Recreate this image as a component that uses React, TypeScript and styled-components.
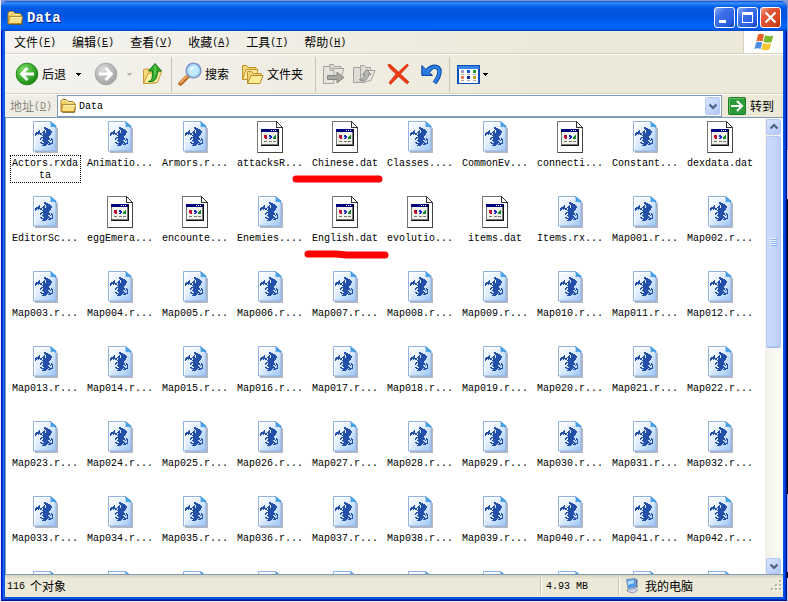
import React from 'react';
import styled, { createGlobalStyle, css } from 'styled-components';

const MONO = '"Liberation Mono", "Noto Sans CJK SC", monospace';
const CJK = '"Noto Sans CJK SC", "Liberation Sans", sans-serif';

const GlobalStyle = createGlobalStyle`
  *, *::before, *::after { box-sizing: border-box; }
  body { margin: 0; overflow: hidden; background: #a9b6da; }
  button, input { margin: 0; padding: 0; border: 0; background: none; font: inherit; color: inherit; }
  ul { list-style: none; margin: 0; padding: 0; }
  svg { display: block; flex: none; }
`;

const Desktop = styled.div`
  height: 100vh;
  display: flex;
  padding: 1px;
  background:
    linear-gradient(#e8eaf4, #e8eaf4) left / 1px 100% no-repeat,
    linear-gradient(#7f9be0 25%, #c3cfee 25% 33%, #000 33% 82%, #9fb2ea 82% 95%, #000 95% 96%, #cfd6ee 96%) right / 1px 100% no-repeat,
    linear-gradient(#7d96dc 50%, #e8eaf4 50%);
`;

const Window = styled.main`
  flex: 1;
  min-width: 0;
  display: flex;
  flex-direction: column;
  border-radius: 7px 7px 0 0;
  background: linear-gradient(90deg, #0019cf 0 1px, #0831d9 1px 2px, #166aee 2px 3px, #0855dd 3px calc(100% - 3px), #0048e8 calc(100% - 3px) calc(100% - 2px), #0030c8 calc(100% - 2px) calc(100% - 1px), #00138c calc(100% - 1px));
  padding: 0 4px 4px;
  box-shadow: inset 0 -1px #00138c, inset 0 -2px #0030c8;
  font: 12px/16px ${CJK};
  color: #000;
`;

const TitleBar = styled.header`
  height: 30px;
  flex: none;
  margin: 0 -4px;
  padding: 3px 6px 0 6px;
  display: flex;
  align-items: center;
  gap: 4px;
  border-radius: 7px 7px 0 0;
  background: linear-gradient(#0950c8 0, #3b91ff 2px, #1272f4 4px, #0359e0 7px, #0054e0 16px, #0064fa 24px, #0062f5 27px, #0046c8 30px);
`;

const Title = styled.h1`
  flex: 1;
  margin: 0;
  font: bold 14px/20px ${MONO};
  color: #fff;
  text-shadow: 1px 1px #0a1883;
`;

const Captions = styled.div`
  display: flex;
  gap: 2px;
`;

const CaptionButton = styled.button<{ $close?: boolean }>`
  width: 21px;
  height: 21px;
  display: grid;
  place-items: center;
  border: 1px solid #fff;
  border-radius: 3px;
  background: ${p => p.$close
    ? 'linear-gradient(135deg, #f0a088, #e2593a 30%, #d84420 75%, #b02a08)'
    : 'linear-gradient(135deg, #8fb0fa, #3f72ea 30%, #2a5fe0 75%, #1440b8)'};
`;

const MenuBar = styled.nav`
  height: 24px;
  flex: none;
  display: flex;
  background: linear-gradient(90deg, #f4f3f0, #ece9d8 75%);
  border-bottom: 1px solid #fff;
`;

const MenuItems = styled.div`
  flex: 1;
  display: flex;
  padding-left: 1px;
  border-bottom: 1px solid #d8d2bd;
`;

const MenuButton = styled.button`
  padding: 0 8px;
  display: flex;
  align-items: center;
  white-space: nowrap;
`;

const Latin = styled.span`
  padding-top: 1px;
  font: 10px/16px ${MONO};
`;

const FlagCell = styled.div`
  width: 40px;
  display: grid;
  place-items: center;
  background: #fff;
  border-left: 1px solid #d8d2bd;
  border-bottom: 1px solid #d8d2bd;
`;

const ToolBar = styled.div`
  height: 40px;
  flex: none;
  display: flex;
  align-items: center;
  padding-left: 9px;
  padding-bottom: 1px;
  background: linear-gradient(90deg, #f3f2ee, #ece9d8 75%);
  border-bottom: 1px solid #fff;
  box-shadow: inset 0 -1px #d8d2bd;
`;

const ToolButton = styled.button<{ $pad?: number }>`
  height: 32px;
  display: flex;
  align-items: center;
  gap: 3px;
  padding: 0 ${p => p.$pad ?? 3}px;
  white-space: nowrap;
`;

const ArrowButton = styled.button<{ $muted?: boolean }>`
  width: ${p => (p.$muted ? 13 : 22)}px;
  height: 32px;
  display: grid;
  place-items: center;
  color: ${p => (p.$muted ? '#b9b6a8' : '#000')};
`;

const Divider = styled.span`
  width: 1px;
  height: 35px;
  margin: 0 3px;
  background: #c9c5b2;
`;

const AddressBar = styled.div`
  height: 22px;
  flex: none;
  display: flex;
  align-items: stretch;
  background: linear-gradient(90deg, #efeee6, #ece9d8 75%);
`;

const AddressLabel = styled.label`
  width: 52px;
  display: flex;
  align-items: center;
  padding-left: 5px;
  color: #8b887c;
  white-space: nowrap;
`;

const AddressBox = styled.div`
  flex: 1;
  min-width: 0;
  display: flex;
  align-items: center;
  gap: 3px;
  padding: 0 1px 0 2px;
  background: #fff;
  border: 1px solid #7f9db9;
`;

const AddressInput = styled.input`
  flex: 1;
  min-width: 0;
  padding-top: 2px;
  font: 10px/16px ${MONO};
  outline: none;
`;

const scrollFace = css`
  display: grid;
  place-items: center;
  border: 1px solid #b4c8f6;
  border-radius: 2px;
  background: linear-gradient(135deg, #d9e4fe, #c1d3fc 60%, #b3c8f7);
`;

const DropButton = styled.button`
  width: 15px;
  height: 18px;
  ${scrollFace}
`;

const GoButton = styled.button`
  width: 61px;
  display: flex;
  align-items: center;
  gap: 4px;
  padding-left: 6px;
`;

const Content = styled.section`
  flex: 1;
  min-height: 0;
  display: flex;
  background: #fff;
  border: solid #7f9db9;
  border-width: 1px 0 1px 1px;
`;

const FileArea = styled.div`
  flex: 1;
  min-width: 0;
  overflow: hidden;
  position: relative;
`;

const FileGrid = styled.ul`
  display: grid;
  grid-template-columns: repeat(auto-fill, 75px);
  grid-auto-rows: 75px;
  padding: 3px 0 0 2px;
`;

const FileItem = styled.li`
  display: flex;
  flex-direction: column;
  align-items: center;
  gap: 2px;
`;

const FileName = styled.button<{ $focused?: boolean }>`
  width: 71px;
  padding: 2px 2px 0 1px;
  border: 1px ${p => (p.$focused ? 'dotted #000' : 'solid transparent')};
  font: 10px/12px ${MONO};
  text-align: center;
  overflow-wrap: anywhere;
`;

const Marker = styled.svg`
  position: absolute;
  left: 286px;
  top: 56px;
`;

const ScrollBar = styled.div`
  width: 18px;
  flex: none;
  display: flex;
  flex-direction: column;
  padding: 1px 2px 0 1px;
  background: linear-gradient(90deg, #f2f0e8, #fefefb);
`;

const ScrollButton = styled.button`
  height: 16px;
  ${scrollFace}
`;

const ScrollTrack = styled.div`
  flex: 1;
  padding-top: 1px;
`;

const ScrollThumb = styled.div`
  height: 50%;
  ${scrollFace}
  background: linear-gradient(90deg, #cbdafd, #c5d5fc 60%, #b7cbf9);
  box-shadow: 0 1px #a3b8e2;
`;

const StatusBar = styled.footer`
  height: 22px;
  flex: none;
  display: flex;
  align-items: center;
  background: linear-gradient(#d5d1bd, #ece9d8 4px, #ece9d8);
`;

const StatusCell = styled.div<{ $width?: number }>`
  ${p => (p.$width ? `width: ${p.$width}px; border-left: 1px solid #c5c1ae; box-shadow: inset 1px 0 #fff; padding-left: 5px;` : 'flex: 1; padding-left: 2px;')}
  height: 18px;
  display: flex;
  align-items: center;
  gap: 5px;
  white-space: nowrap;
`;

const FolderIcon = () => (
  <svg width="16" height="16" viewBox="0 0 16 16" aria-hidden="true">
    <path d="M1 13.500V3l1.200-1.500h4L8 3.500h5l1.500 1.500v9z" fill="#f2cf63" stroke="#a57a1c" strokeLinejoin="round" />
    <path d="M2 4.500 3 2.500h3l1.500 2H13" fill="none" stroke="#fff3b8" />
    <path d="M1.500 13.500 2.500 6.500H15.500L14.500 13.500Z" fill="#fbdf84" stroke="#b98b24" strokeLinejoin="round" />
    <path d="M3.500 7.500h11" stroke="#fff7cf" />
    <path d="M2 14.500h12.500l1-5" fill="none" stroke="#6f5714" strokeOpacity=".7" />
  </svg>
);

const Triangle = () => (
  <svg width="5" height="3" viewBox="0 0 5 3" shapeRendering="crispEdges" aria-hidden="true">
    <path d="M0 0h5v1H4v1H3v1H2V2H1V1H0z" fill="currentColor" />
  </svg>
);

const Chevron = ({ up }: { up?: boolean }) => (
  <svg width="10" height="8" viewBox="0 0 10 8" aria-hidden="true">
    <path d={up ? 'M1.500 5.500 5 2l3.500 3.500' : 'M1.500 2.500 5 6l3.500-3.500'} fill="none" stroke="#4d6185" strokeWidth="2.200" />
  </svg>
);

const RoundArrow = ({ forward }: { forward?: boolean }) => (
  <svg width="24" height="24" viewBox="0 0 24 24" aria-hidden="true">
    <defs>
      <radialGradient id={forward ? 'fwd' : 'bck'} cx=".35" cy=".3" r=".8">
        <stop offset="0" stopColor={forward ? '#dcdcdc' : '#7fdc68'} />
        <stop offset=".6" stopColor={forward ? '#b5b5b5' : '#36a92c'} />
        <stop offset="1" stopColor={forward ? '#a0a0a0' : '#187a12'} />
      </radialGradient>
    </defs>
    <circle cx="12" cy="12" r="10.800" fill={`url(#${forward ? 'fwd' : 'bck'})`} stroke={forward ? '#a5a5a5' : '#258a1e'} />
    <path
      d={forward ? 'M5 12h12M11.500 6 17.500 12l-6 6' : 'M19 12H7M12.500 6 6.500 12l6 6'}
      fill="none" stroke="#fff" strokeWidth="2.800"
    />
  </svg>
);

const UpIcon = () => (
  <svg width="22" height="24" viewBox="0 0 22 24" aria-hidden="true">
    <path d="M2.500 21.500V8l1-1H8l1.500 2H14v12z" fill="#f5d978" stroke="#c79a32" />
    <path d="M2.500 21.500 7 11.500l13.500-2-4 11z" fill="#fdeea6" stroke="#c79a32" strokeLinejoin="round" />
    <path d="M7 19.500c4-.5 4.500-3 4.500-10.500H7.500l6.500-7.500L20.500 9h-4c0 8-3 11.500-9.500 10.500z" fill="#35ad2c" stroke="#14790f" strokeLinejoin="round" />
    <path d="M14 4v9" stroke="#79dc65" />
  </svg>
);

const SearchIcon = () => (
  <svg width="24" height="24" viewBox="0 0 24 24" aria-hidden="true">
    <path d="m2.500 21.500 7-7" stroke="#b46a28" strokeWidth="4.500" strokeLinecap="round" />
    <path d="m2.500 20.500 6.500-6.500" stroke="#f3a55e" strokeWidth="2" strokeLinecap="round" />
    <circle cx="15.500" cy="8.500" r="7.300" fill="#c3ebfd" stroke="#8293c9" strokeWidth="1.600" />
    <circle cx="15.500" cy="8.500" r="5.800" fill="none" stroke="#92d4f7" />
    <path d="M12 8c.5-3 3-4 5.500-3.500C16 6 14 8 12 8z" fill="#fff" />
  </svg>
);

const FoldersIcon = () => (
  <svg width="23" height="22" viewBox="0 0 23 22" aria-hidden="true">
    <path d="M1.500 16V2.500h4l1.500 2h8V8" fill="#f4d571" stroke="#c1922b" strokeLinejoin="round" />
    <path d="M1.500 16.500 5 6.500h12l-3 10z" fill="#fdeb9c" stroke="#c1922b" strokeLinejoin="round" />
    <path d="M6.500 20V8.500h4l1.500 2h8V13" fill="#f4d571" stroke="#c1922b" strokeLinejoin="round" />
    <path d="M6.500 20.500 10 12.500h12l-3 8z" fill="#fdec98" stroke="#b98b24" strokeLinejoin="round" />
  </svg>
);

const TransferIcon = ({ copy }: { copy?: boolean }) => (
  <svg width="24" height="22" viewBox="0 0 24 22" aria-hidden="true">
    <g fill="#dddcd6" stroke="#a3a29c" strokeLinejoin="round">
      {copy ? (
        <>
          <path d="M1.500 4.500H9l4 3v12H1.500z" />
          <path d="M8.500 17.500v-15h3.500l1.500 2h5v3" />
          <path d="m9 19.500 4.500-12h9.500l-4 10z" fill="#e9e8e3" />
          <path d="M7 16.500c4 0 6-2 6-5h-2.500L15 6.500l4 5h-2.500c0 5-4 7.500-9.500 5z" fill="#b8b7b1" stroke="#8e8d88" />
        </>
      ) : (
        <>
          <path d="M7.500 12V1.500h4l1.500 2h6V12" />
          <path d="m7 12 3-6.500h12L19 14z" fill="#e9e8e3" />
          <path d="M1.500 3.500H8l4 4v13H1.500z" fill="#e5e4de" />
          <path d="M8 3.500v4h4" fill="none" />
          <path d="M5.500 12.500H15V9l7 5.500-7 5.500v-3.500H5.500z" fill="#a9a8a2" stroke="#85847f" />
        </>
      )}
    </g>
  </svg>
);

const DeleteIcon = () => (
  <svg width="23" height="22" viewBox="0 0 23 22" aria-hidden="true">
    <path d="M1 1.500C3 1 4 2 5.500 3.500l6 5.500 8.500-8 1.500 1.500-8 8.500 8.500 8-2 2-8.500-7.500-8 8L2 19.500l7-8.500-6-5.500C2 4 1.200 3 1 1.500z" fill="#ee3a12" stroke="#c92500" strokeWidth=".6" />
  </svg>
);

const UndoIcon = () => (
  <svg width="22" height="22" viewBox="0 0 22 22" aria-hidden="true">
    <path d="M6 8.500C10.500 2 18.500 2 18.500 8.500c0 4-2 7.500-5 11.500" fill="none" stroke="#0d4aa8" strokeWidth="4.500" />
    <path d="M.8 2.500v10h10.700L8.500 9.500 11 6.500 7.500 4 5 6.500z" fill="#2b78dc" stroke="#0d4aa8" strokeLinejoin="round" />
    <path d="M6 9C10.500 2.500 18.500 2.500 18.500 8.500c0 4-2 7-5 11" fill="none" stroke="#2f80e4" strokeWidth="2.600" />
  </svg>
);

const ViewsIcon = () => (
  <svg width="23" height="19" viewBox="0 0 23 19" shapeRendering="crispEdges" aria-hidden="true">
    <rect width="23" height="19" fill="#0a50ba" />
    <rect x="1" y="1" width="21" height="3" fill="#3584e8" />
    <rect x="2" y="4" width="19" height="14" fill="#fff" />
    {[['#a49cc8', '#ef7a51'], ['#1557dc', '#102c8e'], ['#129a26', '#c99b1a']].map(([a, b], i) => (
      <React.Fragment key={a}>
        <rect x={4 + i * 6} y="5" width="3" height="3" fill={a} />
        <rect x={4 + i * 6} y="9" width="3" height="1" fill="#aaa" />
        <rect x={4 + i * 6} y="11" width="3" height="3" fill={b} />
        <rect x={4 + i * 6} y="15" width="3" height="1" fill="#aaa" />
      </React.Fragment>
    ))}
  </svg>
);

const FlagIcon = () => (
  <svg width="20" height="18" viewBox="0 0 20 18" aria-hidden="true">
    <path d="M4 1.500c2-1.300 4-1 6 .2L8.500 8.500C6.500 7.300 4.500 7.500 2.300 8.500z" fill="#e9602c" />
    <path d="M11 2.200c3 1.300 5.500 1.200 8.300.2l-1.700 6.500c-3 1.300-5.500.9-8.100-.2z" fill="#7cb928" />
    <path d="M2 9.700c2.200-1.200 4.200-1.200 6.200 0L6.600 16C4.500 14.800 2.500 15 .5 15.900z" fill="#4b8fe2" />
    <path d="M9.200 10c2.800 1.200 5.300 1.300 8 .3l-1.700 6c-2.800 1.400-5.500 1.100-8 .1z" fill="#f7c52d" />
  </svg>
);

const GoIcon = () => (
  <svg width="18" height="18" viewBox="0 0 18 18" aria-hidden="true">
    <rect x=".5" y=".5" width="17" height="17" rx="1" fill="#2c9a38" stroke="#1b7a28" />
    <path d="M1.500 16V1.500H16" fill="none" stroke="#62c060" />
    <path d="M3 9h10M9 4l5 5-5 5" fill="none" stroke="#fff" strokeWidth="2" />
  </svg>
);

const dragonRows = [
  '.........##......',
  '.........####....',
  '..........#####..',
  '....#....#.#####.',
  '...##...##.######',
  '.####..###.######',
  '#######.########.',
  '##.#.##.########.',
  '#......########..',
  '........######...',
  '......########...',
  '.....##.#######.#',
  '.....#..#######.##',
  '.......######..#.#',
  '........######...#',
  '.....##..######..#',
  '......#######.####',
  '........####.###..',
  '.......####.......',
];

const dragonPath = dragonRows
  .flatMap((row, y) => [...row.matchAll(/#+/g)].map(run => `M${run.index + 6} ${y + 6}h${run[0].length}v1h-${run[0].length}z`))
  .join('');

const DragonFile = () => (
  <svg width="33" height="32" viewBox="0 0 33 32" aria-hidden="true">
    <defs>
      <linearGradient id="sheet" x1="0" y1="0" x2="1" y2="1">
        <stop offset="0" stopColor="#fff" />
        <stop offset=".45" stopColor="#e2effe" />
        <stop offset="1" stopColor="#9cc6f8" />
      </linearGradient>
    </defs>
    <path d="M6 31h22V7" fill="none" stroke="#6b6f86" strokeOpacity=".5" strokeWidth="2" />
    <path d="M4.500.5h17.500l5 5v24.500H4.500z" fill="url(#sheet)" stroke="#8fb2e2" />
    <path d="M5.500 29V1.500H21" fill="none" stroke="#fff" />
    <path d="M21.500.8c.8 2 .7 3.500.3 5 2-.5 4-.3 5.200.7V5z" fill="#37a3ee" stroke="#4f8fd2" strokeWidth=".6" />
    <path d={dragonPath} fill="#244fa9" />
  </svg>
);

const DatFile = () => (
  <svg width="33" height="32" viewBox="0 0 33 32" shapeRendering="crispEdges" aria-hidden="true">
    <path d="M3.500.5h19l6 6v25h-25z" fill="#fff" stroke="#77776f" />
    <path d="M28.500 6v25.500H4" fill="none" stroke="#45453f" />
    <path d="M22.500.5v6h6z" fill="#f7f7f2" stroke="#333" />
    <path d="M7.500 8.500h16v15h-16z" fill="#f2f2ea" stroke="#777" />
    <path d="M24.500 8v16.500H7" fill="none" stroke="#111" />
    <rect x="7" y="8" width="17" height="3" fill="#00007e" />
    <path d="M17 9h1v1h-1zM19 9h1v1h-1zM21 9h1v1h-1z" fill="#fff" />
    <path d="M10 14h3v4h-2v-1h-1z" fill="#d5082c" />
    <path d="M12 14h1v2h-1z" fill="#7a1a70" />
    <path d="M15 14h2v1h1v2h-1v1h-2v-1h1v-1h-1z" fill="#1724d0" />
    <path d="M20 15h1v-1h1v4h-3v-2h1z" fill="#0d8a2c" />
    <path d="M10 20h3v1h-3zM15 20h3v1h-3zM19 20h3v1h-3z" fill="#777" />
  </svg>
);

const ComputerIcon = () => (
  <svg width="16" height="16" viewBox="0 0 16 16" aria-hidden="true">
    <path d="m2.500 1.500 9-1 .5 8.500-8 1.500z" fill="#4b9cf0" stroke="#8394b8" />
    <path d="m4 3 6-1v3L4 7z" fill="#b3dbfd" />
    <path d="m12 .8 1.500 1v8.200L12 9z" fill="#5a6d9c" />
    <path d="m3 12 8-1.500 2.500 1.500-4 3-6-1.500z" fill="#d5daea" stroke="#7686ab" strokeWidth=".8" />
  </svg>
);

const Grip = () => (
  <svg width="12" height="12" viewBox="0 0 12 12" shapeRendering="crispEdges" aria-hidden="true">
    {[[8, 0], [4, 4], [8, 4], [0, 8], [4, 8], [8, 8]].map(([x, y]) => (
      <React.Fragment key={`${x}-${y}`}>
        <rect x={x + 1} y={y + 1} width="2" height="2" fill="#fff" />
        <rect x={x} y={y} width="2" height="2" fill="#b8b4a2" />
      </React.Fragment>
    ))}
  </svg>
);

const menus = [['文件', 'F'], ['编辑', 'E'], ['查看', 'V'], ['收藏', 'A'], ['工具', 'T'], ['帮助', 'H']];

const files = [
  'Actors.rxdata', 'Animatio...', 'Armors.r...', 'attacksR...', 'Chinese.dat',
  'Classes....', 'CommonEv...', 'connecti...', 'Constant...', 'dexdata.dat',
  'EditorSc...', 'eggEmera...', 'encounte...', 'Enemies....', 'English.dat',
  'evolutio...', 'items.dat', 'Items.rx...',
  ...Array.from({ length: 42 }, (_, i) => `Map${String(i + 1).padStart(3, '0')}.r...`),
];

const datFiles = new Set(['attacksR...', 'Chinese.dat', 'connecti...', 'dexdata.dat', 'eggEmera...', 'encounte...', 'English.dat', 'evolutio...', 'items.dat']);

// Files of the row that is only partly scrolled into view; their names are below the fold.
const partialRow = Array.from({ length: 10 }, (_, i) => i);

export default function App() {
  return (
    <Desktop>
      <GlobalStyle />
      <Window>
        <TitleBar>
          <FolderIcon />
          <Title>Data</Title>
          <Captions>
            <CaptionButton aria-label="最小化">
              <svg width="15" height="15" viewBox="0 0 15 15"><path d="M2 10h7v3H2z" fill="#fff" /></svg>
            </CaptionButton>
            <CaptionButton aria-label="最大化">
              <svg width="15" height="15" viewBox="0 0 15 15"><path d="M2 2h11v11H2zM3 5v7h9V5z" fill="#fff" fillRule="evenodd" /></svg>
            </CaptionButton>
            <CaptionButton $close aria-label="关闭">
              <svg width="15" height="15" viewBox="0 0 15 15"><path d="m2.500 2.500 10 10M12.500 2.500l-10 10" stroke="#fff" strokeWidth="2.200" /></svg>
            </CaptionButton>
          </Captions>
        </TitleBar>

        <MenuBar>
          <MenuItems>
            {menus.map(([name, key]) => (
              <MenuButton key={key}>{name}<Latin>(<u>{key}</u>)</Latin></MenuButton>
            ))}
          </MenuItems>
          <FlagCell><FlagIcon /></FlagCell>
        </MenuBar>

        <ToolBar>
          <ToolButton $pad={1}><RoundArrow />后退</ToolButton>
          <ArrowButton aria-label="后退列表"><Triangle /></ArrowButton>
          <ToolButton $pad={5} aria-label="前进"><RoundArrow forward /></ToolButton>
          <ArrowButton $muted aria-label="前进列表"><Triangle /></ArrowButton>
          <ToolButton $pad={5} aria-label="向上"><UpIcon /></ToolButton>
          <Divider />
          <ToolButton><SearchIcon />搜索</ToolButton>
          <ToolButton $pad={9}><FoldersIcon />文件夹</ToolButton>
          <Divider />
          <ToolButton aria-label="移至"><TransferIcon /></ToolButton>
          <ToolButton aria-label="复制到"><TransferIcon copy /></ToolButton>
          <ToolButton $pad={8} aria-label="删除"><DeleteIcon /></ToolButton>
          <ToolButton aria-label="撤销"><UndoIcon /></ToolButton>
          <Divider />
          <ToolButton $pad={4} aria-label="查看方式"><ViewsIcon /><Triangle /></ToolButton>
        </ToolBar>

        <AddressBar>
          <AddressLabel htmlFor="address">地址<Latin>(<u>D</u>)</Latin></AddressLabel>
          <AddressBox>
            <FolderIcon />
            <AddressInput id="address" defaultValue="Data" />
            <DropButton aria-label="地址列表"><Chevron /></DropButton>
          </AddressBox>
          <GoButton><GoIcon />转到</GoButton>
        </AddressBar>

        <Content>
          <FileArea>
            <FileGrid>
              {files.map((name, i) => (
                <FileItem key={name}>
                  {datFiles.has(name) ? <DatFile /> : <DragonFile />}
                  <FileName $focused={i === 0}>{name}</FileName>
                </FileItem>
              ))}
              {partialRow.map(i => (
                <FileItem key={i}><DragonFile /></FileItem>
              ))}
            </FileGrid>
            <Marker width="100" height="90" viewBox="0 0 100 90" aria-hidden="true">
              <path d="M4 5H87M16 80H44L55 81H93" fill="none" stroke="#f00" strokeWidth="7" strokeLinecap="round" strokeLinejoin="round" />
            </Marker>
          </FileArea>
          <ScrollBar>
            <ScrollButton aria-label="向上滚动"><Chevron up /></ScrollButton>
            <ScrollTrack>
              <ScrollThumb>
                <svg width="7" height="8" viewBox="0 0 7 8" shapeRendering="crispEdges" aria-hidden="true">
                  <path d="M0 .5h6M0 2.500h6M0 4.500h6M0 6.500h6" stroke="#eef4fe" />
                  <path d="M1 1.500h6M1 3.500h6M1 5.500h6M1 7.500h6" stroke="#8cb0f8" />
                </svg>
              </ScrollThumb>
            </ScrollTrack>
            <ScrollButton aria-label="向下滚动"><Chevron /></ScrollButton>
          </ScrollBar>
        </Content>

        <StatusBar>
          <StatusCell><Latin>116</Latin>个对象</StatusCell>
          <StatusCell $width={78}><Latin>4.93 MB</Latin></StatusCell>
          <StatusCell $width={153}><ComputerIcon />我的电脑</StatusCell>
          <Grip />
        </StatusBar>
      </Window>
    </Desktop>
  );
}
